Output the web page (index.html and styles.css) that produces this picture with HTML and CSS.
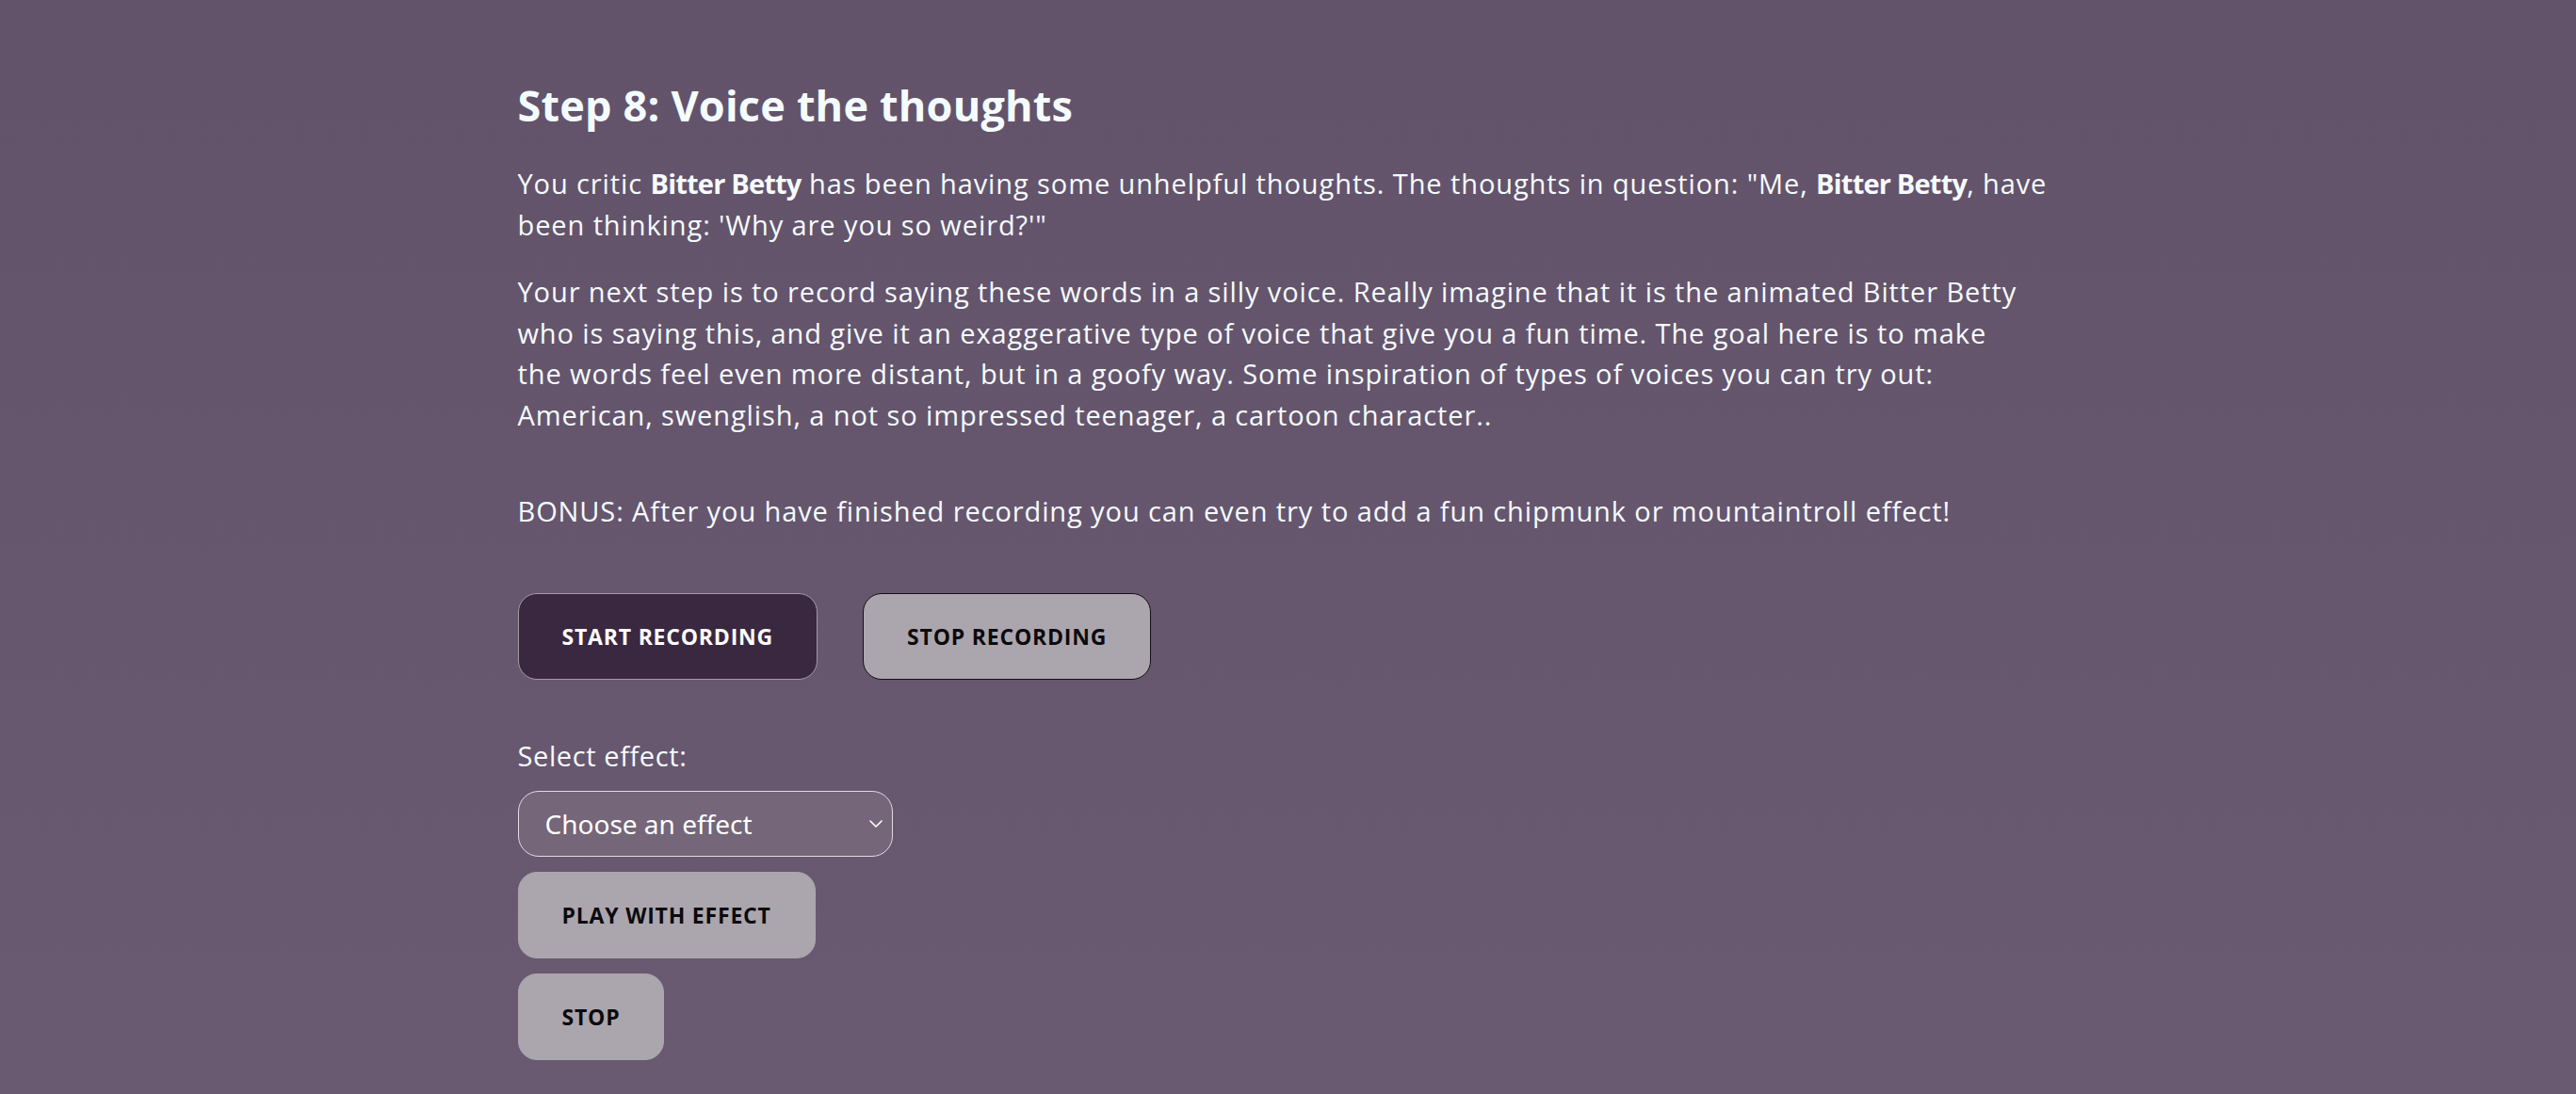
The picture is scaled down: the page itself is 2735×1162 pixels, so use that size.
FILE: index.html
```html
<!DOCTYPE html>
<html lang="en">
<head>
<meta charset="utf-8">
<title>Step 8: Voice the thoughts</title>
<link rel="stylesheet" href="styles.css">
</head>
<body>
<main class="page">
  <h1 class="title">Step 8: Voice the thoughts</h1>
  <p class="text">You critic <strong>Bitter Betty</strong> has been having some unhelpful thoughts. The thoughts in question: "Me, <strong>Bitter Betty</strong>, have<br>been thinking: 'Why are you so weird?'"</p>
  <p class="text">Your next step is to record saying these words in a silly voice. Really imagine that it is the animated Bitter Betty<br>who is saying this, and give it an exaggerative type of voice that give you a fun time. The goal here is to make<br>the words feel even more distant, but in a goofy way. Some inspiration of types of voices you can try out:<br>American, swenglish, a not so impressed teenager, a cartoon character..</p>
  <p class="text bonus">BONUS: After you have finished recording you can even try to add a fun chipmunk or mountaintroll effect!</p>

  <div class="record-row">
    <button class="btn btn-dark" type="button">Start recording</button>
    <button class="btn btn-light btn-outlined" type="button">Stop recording</button>
  </div>

  <div class="effects">
    <label class="effect-label" for="effect">Select effect:</label>
    <div class="select-wrap">
      <select id="effect" class="select">
        <option>Choose an effect</option>
        <option>Chipmunk</option>
        <option>Mountaintroll</option>
      </select>
      <svg class="chevron" viewBox="0 0 14 8" width="14" height="8" aria-hidden="true"><path d="M1 1l6 6 6-6" fill="none" stroke="#ffffff" stroke-width="1.6" stroke-linecap="round" stroke-linejoin="round"/></svg>
    </div>
    <button class="btn btn-light" type="button">Play with effect</button>
    <button class="btn btn-light" type="button">Stop</button>
  </div>
</main>
</body>
</html>
```

FILE: styles.css
```css
html, body {
  margin: 0;
  padding: 0;
}

body {
  min-height: 100vh;
  background: linear-gradient(180deg, #62536a 0%, #695a71 100%);
  color: #ffffff;
  font-family: "Open Sans", "Noto Sans", sans-serif;
}

.page {
  width: 1636px;
  margin: 0 auto;
  padding-top: 85px;
  padding-bottom: 40px;
}

.title {
  margin: 0 0 34px;
  font-size: 45px;
  line-height: 54px;
  font-weight: 700;
  letter-spacing: 0.2px;
  color: #f4fcff;
}

.text {
  margin: 0 0 28px;
  font-size: 29px;
  line-height: 43.6px;
  font-weight: 400;
  letter-spacing: 0.9px;
  color: #f6fbff;
}

.text strong {
  font-weight: 700;
  letter-spacing: -0.8px;
}

.bonus {
  margin-top: 58px;
}

.record-row {
  display: flex;
  gap: 48px;
  margin-top: 66px;
}

.btn {
  font-family: "Open Sans", "Noto Sans", sans-serif;
  font-size: 23px;
  font-weight: 700;
  text-transform: uppercase;
  letter-spacing: 0.8px;
  line-height: 30px;
  padding: 30px 46px;
  border-radius: 20px;
  border: 1px solid transparent;
  cursor: pointer;
}

.btn-dark {
  background: #3a2740;
  color: #ffffff;
  border-color: #a49aa6;
}

.btn-light {
  background: #aba6ad;
  color: #0c0a0d;
  border-color: #aba6ad;
}

.btn-outlined {
  border-color: #141014;
}

.effects {
  display: flex;
  flex-direction: column;
  align-items: flex-start;
  gap: 16px;
  margin-top: 61px;
}

.effect-label {
  font-size: 29px;
  line-height: 40px;
  letter-spacing: 0.6px;
  color: #f6fbff;
  margin-bottom: 1px;
}

.select-wrap {
  position: relative;
  width: 398px;
}

.select {
  appearance: none;
  -webkit-appearance: none;
  width: 398px;
  height: 70px;
  padding: 0 40px 0 28px;
  border: 1px solid #e2dce4;
  border-radius: 22px;
  background: #756679;
  color: #ffffff;
  font-family: "Noto Sans", "Open Sans", sans-serif;
  font-size: 28px;
}

.chevron {
  position: absolute;
  right: 11px;
  top: 31px;
  pointer-events: none;
}
```
